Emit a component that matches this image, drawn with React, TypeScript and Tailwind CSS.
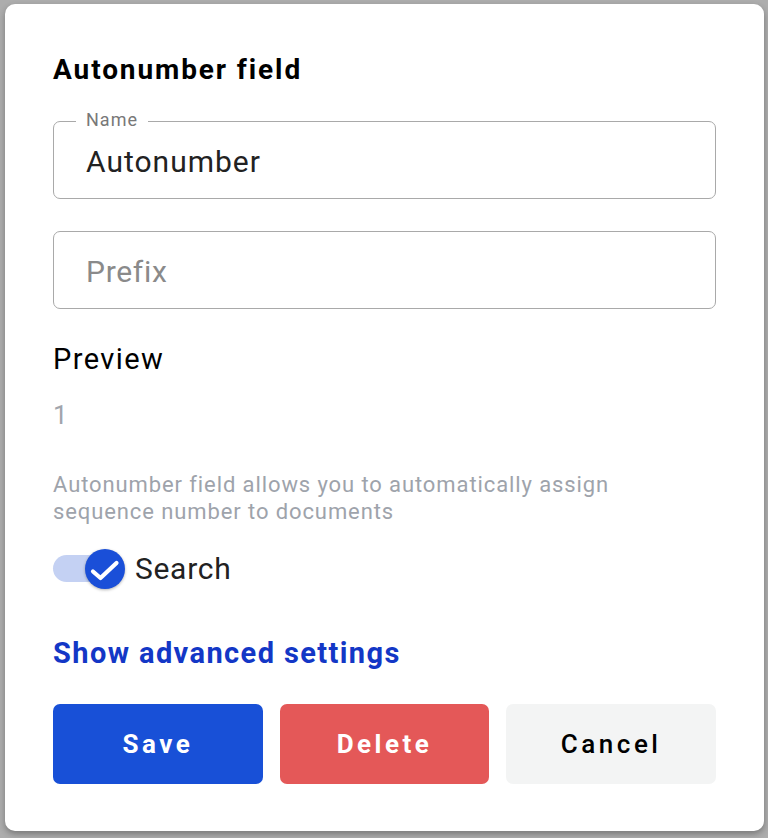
import React from 'react'

const font = { fontFamily: 'Roboto, "Noto Sans", sans-serif' }

function OutlinedField({ label, value, placeholder }: { label?: string; value?: string; placeholder?: string }) {
  return (
    <div className="relative h-[78px] rounded-[7px] border border-[#a9a9a9] flex items-center pl-[32px] pt-[3px]">
      {label && (
        <span className="absolute left-[22px] top-[-11px] bg-white px-[10px] text-[18px] leading-[17px] tracking-[1px] text-[#787878]">
          {label}
        </span>
      )}
      {value ? (
        <span className="text-[30px] leading-[36px] tracking-[1px] text-[#222]">{value}</span>
      ) : (
        <span className="text-[30px] leading-[36px] tracking-[0.7px] text-[#8a8a8a]">{placeholder}</span>
      )}
    </div>
  )
}

function Toggle() {
  return (
    <div className="relative w-[72px] h-[40px] mr-[10px] shrink-0">
      <div className="absolute left-0 top-[6px] w-[62px] h-[27px] rounded-full bg-[#c4d1f3]" />
      <div className="absolute left-[32px] top-0 w-[40px] h-[40px] rounded-full bg-[#1a4fd8] shadow-[0_1px_3px_rgba(0,0,0,0.3)]">
        <svg viewBox="0 0 40 40" className="w-[40px] h-[40px]">
          <path d="M8 22.5 L15.5 29 L31.5 14" fill="none" stroke="white" strokeWidth="4.2" strokeLinecap="round" strokeLinejoin="round" />
        </svg>
      </div>
    </div>
  )
}

export default function App() {
  return (
    <div className="w-[768px] h-[838px] bg-[#adadad] pt-[4px] pl-[5px] overflow-hidden" style={font}>
      <div className="w-[759px] h-[827px] rounded-[10px] bg-white shadow-[0_3px_6px_rgba(0,0,0,0.3)] px-[48px] pt-[50px] flex flex-col">
        <h1 className="text-[28px] leading-[32px] font-bold text-black tracking-[1.9px]">Autonumber field</h1>

        <div className="mt-[35px]">
          <OutlinedField label="Name" value="Autonumber" />
        </div>
        <div className="mt-[32px]">
          <OutlinedField placeholder="Prefix" />
        </div>

        <div className="mt-[33px] text-[29px] leading-[34px] tracking-[1.4px] text-black">Preview</div>
        <div className="mt-[24px] text-[26px] leading-[30px] text-[#a1a5ad]">1</div>

        <p className="mt-[41px] text-[22px] leading-[27px] tracking-[0.9px] text-[#9ea3ab]">
          Autonumber field allows you to automatically assign
          <br />
          sequence number to documents
        </p>

        <div className="mt-[24px] flex items-center h-[40px]">
          <Toggle />
          <span className="text-[30px] leading-[36px] tracking-[0.7px] text-[#222]">Search</span>
        </div>

        <div className="mt-[47px] text-[29px] leading-[34px] font-bold tracking-[1.4px] text-[#1337c6]">Show advanced settings</div>

        <div className="mt-[34px] grid grid-cols-3 gap-[17px]">
          <button className="h-[80px] rounded-[7px] bg-[#1850d7] text-white text-[26px] font-bold tracking-[3.5px]">
            Save
          </button>
          <button className="h-[80px] rounded-[7px] bg-[#e45858] text-white text-[26px] font-bold tracking-[3.5px]">
            Delete
          </button>
          <button className="h-[80px] rounded-[7px] bg-[#f3f4f4] text-black text-[26px] font-medium tracking-[3.5px]">
            Cancel
          </button>
        </div>
      </div>
    </div>
  )
}
